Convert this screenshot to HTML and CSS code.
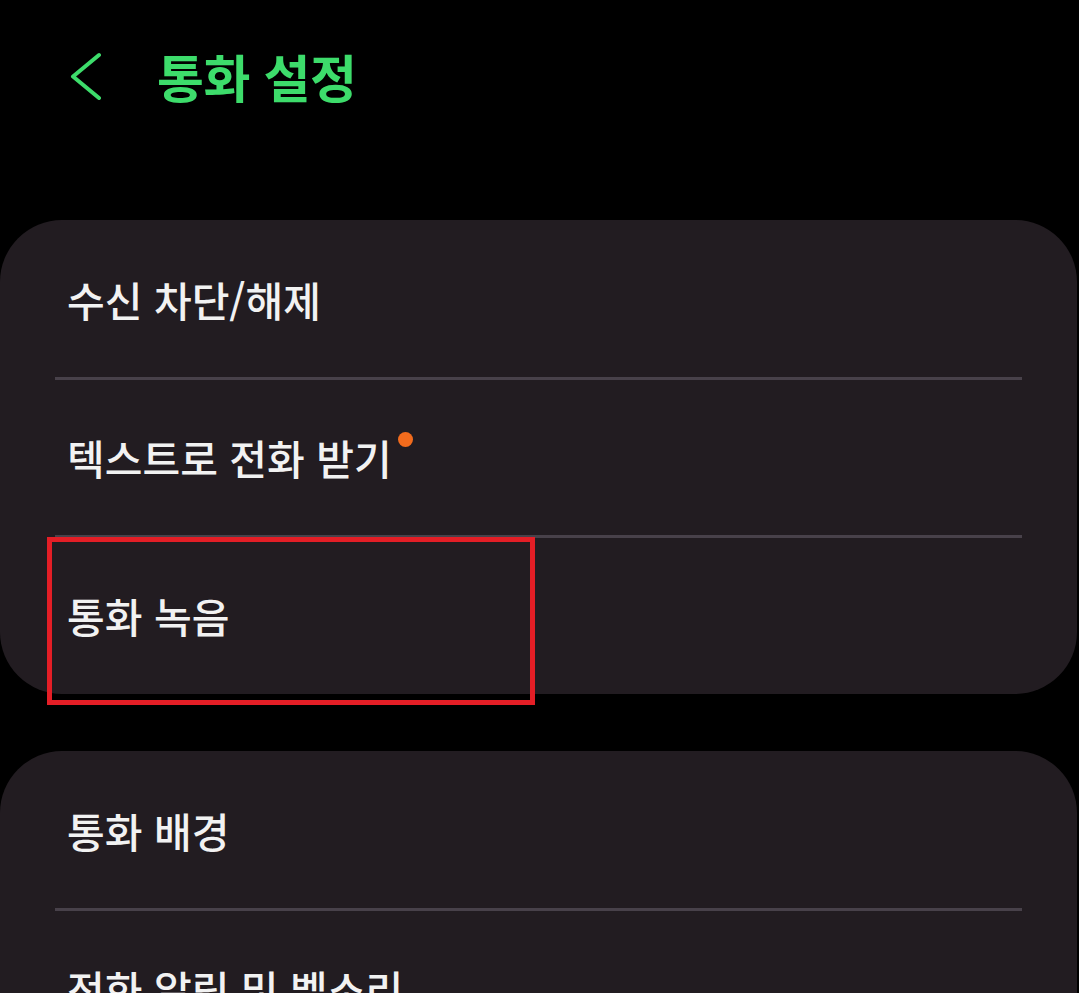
FILE: index.html
```html
<!DOCTYPE html>
<html lang="ko">
<head>
    <meta charset="UTF-8">
    <meta name="viewport" content="width=device-width, initial-scale=1.0">
    <title>통화 설정</title>
    <link rel="stylesheet" href="styles.css">
</head>
<body>

    <header class="top-bar">
        <button class="back-btn" aria-label="뒤로">
            <svg width="40" height="50" viewBox="0 0 40 50">
                <polyline points="29,5 3,26.5 29,48" fill="none" stroke="#3ddc6b" stroke-width="4" stroke-linecap="round" stroke-linejoin="round"/>
            </svg>
        </button>
        <h1 class="title">통화 설정</h1>
    </header>

    <!-- First group -->
    <section class="card card-first">
        <div class="row">수신 차단/해제</div>
        <div class="row">텍스트로 전화 받기<span class="new-dot"></span></div>
        <div class="row">통화 녹음</div>
        <div class="highlight"></div>
    </section>

    <!-- Second group -->
    <section class="card">
        <div class="row">통화 배경</div>
        <div class="row">전화 알림 및 벨소리</div>
    </section>

</body>
</html>
```

FILE: styles.css
```css
/* Base styling */
html, body {
    margin: 0;
    padding: 0;
    background-color: #000;
    overflow: hidden;
}

body {
    width: 1079px;
    height: 993px;
    font-family: "Noto Sans CJK KR", "Noto Sans", sans-serif;
    color: #f2f2f2;
}

/* Header */
.top-bar {
    height: 220px;
    display: flex;
    align-items: flex-start;
    box-sizing: border-box;
    padding-top: 49px;
}

.back-btn {
    background: none;
    border: none;
    padding: 0;
    margin-left: 70px;
    width: 40px;
    height: 54px;
    cursor: pointer;
}

.title {
    margin: 0 0 0 47px;
    font-size: 51px;
    font-weight: 700;
    line-height: 54px;
    letter-spacing: -0.5px;
    color: #3ddc6b;
}

/* Setting groups */
.card {
    position: relative;
    width: 1077px;
    background-color: #221c21;
    border-radius: 62px;
    margin-bottom: 57px;
}

.row {
    height: 158px;
    display: flex;
    align-items: center;
    padding-left: 67px;
    font-size: 41px;
    font-weight: 500;
    letter-spacing: 0;
    position: relative;
}

.row + .row::before {
    content: "";
    position: absolute;
    top: -1px;
    left: 55px;
    right: 55px;
    height: 3px;
    background-color: #48414a;
}

.card-first .row:last-of-type {
    height: 156px;
}

.new-dot {
    display: inline-block;
    width: 15px;
    height: 15px;
    border-radius: 50%;
    background-color: #f26b1d;
    align-self: flex-start;
    margin-top: 54px;
    margin-left: 6px;
}

/* Red annotation box */
.highlight {
    position: absolute;
    left: 47px;
    top: 317px;
    width: 478px;
    height: 158px;
    border: 5px solid #e41e26;
}
```
